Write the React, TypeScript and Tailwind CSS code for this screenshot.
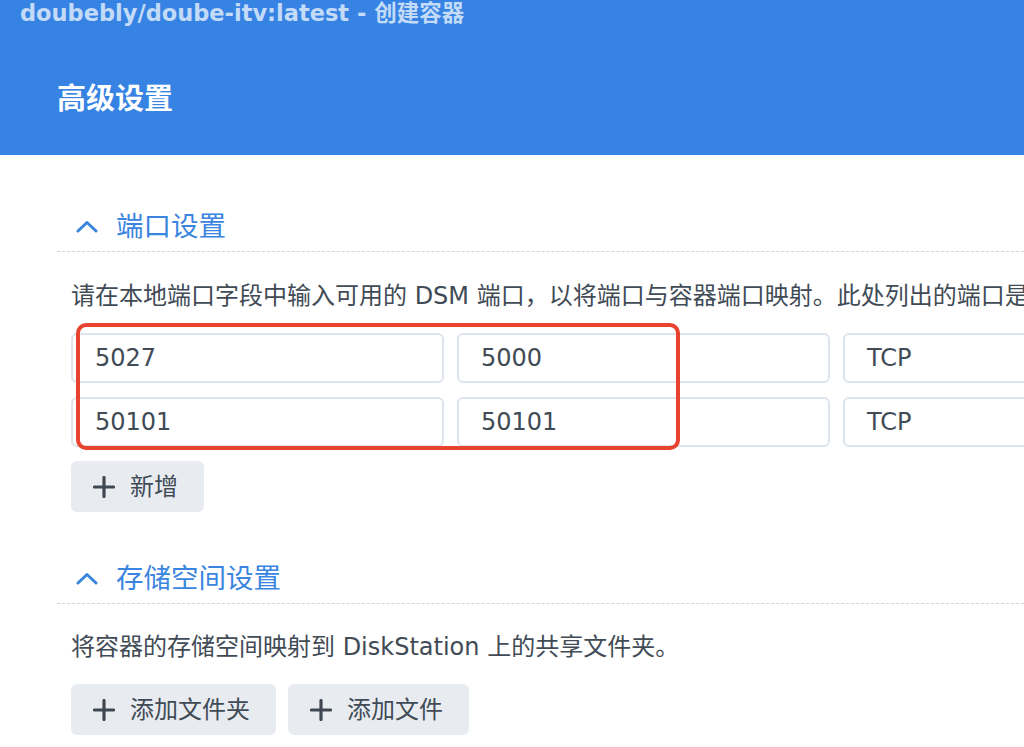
import React from 'react';

const FONT = { fontFamily: '"DejaVu Sans", "Noto Sans CJK SC", sans-serif' };

const Chevron: React.FC = () => (
  <svg width="22" height="13" viewBox="0 0 22 13" fill="none">
    <polyline points="2,11 11,2.5 20,11" stroke="#3a85e0" strokeWidth="3" strokeLinecap="round" strokeLinejoin="round" />
  </svg>
);

const Plus: React.FC = () => (
  <svg width="22" height="22" viewBox="0 0 22 22" fill="none">
    <path d="M11 1.5v19M1.5 11h19" stroke="#3f4852" strokeWidth="3.2" strokeLinecap="round" />
  </svg>
);

const SectionHeader: React.FC<{ title: string }> = ({ title }) => (
  <div className="h-[51px] flex items-center gap-[18px] pl-[19px] border-b border-dashed border-[#ccd6e2]">
    <Chevron />
    <span className="text-[27.5px] leading-[34px] text-[#3a85e0]">{title}</span>
  </div>
);

const AddButton: React.FC<{ label: string }> = ({ label }) => (
  <button className="h-[51px] flex items-center gap-[15px] pl-[22px] pr-[26px] rounded-[6px] bg-[#e8ecf1] text-[24px] text-[#414b56] cursor-pointer">
    <Plus />
    <span>{label}</span>
  </button>
);

const Field: React.FC<{ value: string }> = ({ value }) => (
  <div className="w-[373px] h-[50px] shrink-0 flex items-center pl-[22px] rounded-[6px] border-2 border-[#dde4ed] bg-white text-[24px] text-[#414b56]">
    {value}
  </div>
);

const ports = [
  { local: '5027', container: '5000', proto: 'TCP' },
  { local: '50101', container: '50101', proto: 'TCP' },
];

export default function App() {
  return (
    <div className="w-[1024px] h-[747px] overflow-hidden bg-white" style={FONT}>
      {/* Title bar */}
      <div className="h-[155px] bg-[#3683e4] pl-[20px] pt-px">
        <div className="relative -top-[2px] h-[28px] leading-[28px] text-[22.5px] font-bold text-[#c3dbf7] whitespace-nowrap">
          doubebly/doube-itv:latest - 创建容器
        </div>
        <div className="mt-[54px] pl-[37px] h-[32px] leading-[32px] text-[29px] font-bold text-white">高级设置</div>
      </div>

      <div className="pl-[57px]">
        {/* Port settings */}
        <div className="pt-[46px]">
          <SectionHeader title="端口设置" />
          <div className="pl-[14px]">
            <div className="mt-[29px] h-[30px] leading-[30px] text-[24px] text-[#414b56] whitespace-nowrap">
              请在本地端口字段中输入可用的 DSM 端口，以将端口与容器端口映射。此处列出的端口是容器默认使用的端口。
            </div>
            <div className="relative mt-[22px] flex flex-col gap-[14px]">
              {ports.map((p) => (
                <div key={p.local} className="flex gap-[13px]">
                  <Field value={p.local} />
                  <Field value={p.container} />
                  <Field value={p.proto} />
                </div>
              ))}
              {/* highlight */}
              <div className="absolute left-[5px] -top-[10px] w-[604px] h-[127px] rounded-[10px] border-4 border-[#e8432f] pointer-events-none" />
            </div>
            <div className="mt-[14px] flex">
              <AddButton label="新增" />
            </div>
          </div>
        </div>

        {/* Storage settings */}
        <div className="mt-[41px]">
          <SectionHeader title="存储空间设置" />
          <div className="pl-[14px]">
            <div className="mt-[28px] h-[30px] leading-[30px] text-[24px] text-[#414b56] whitespace-nowrap">
              将容器的存储空间映射到 DiskStation 上的共享文件夹。
            </div>
            <div className="mt-[22px] flex gap-[12px]">
              <AddButton label="添加文件夹" />
              <AddButton label="添加文件" />
            </div>
          </div>
        </div>
      </div>
    </div>
  );
}
